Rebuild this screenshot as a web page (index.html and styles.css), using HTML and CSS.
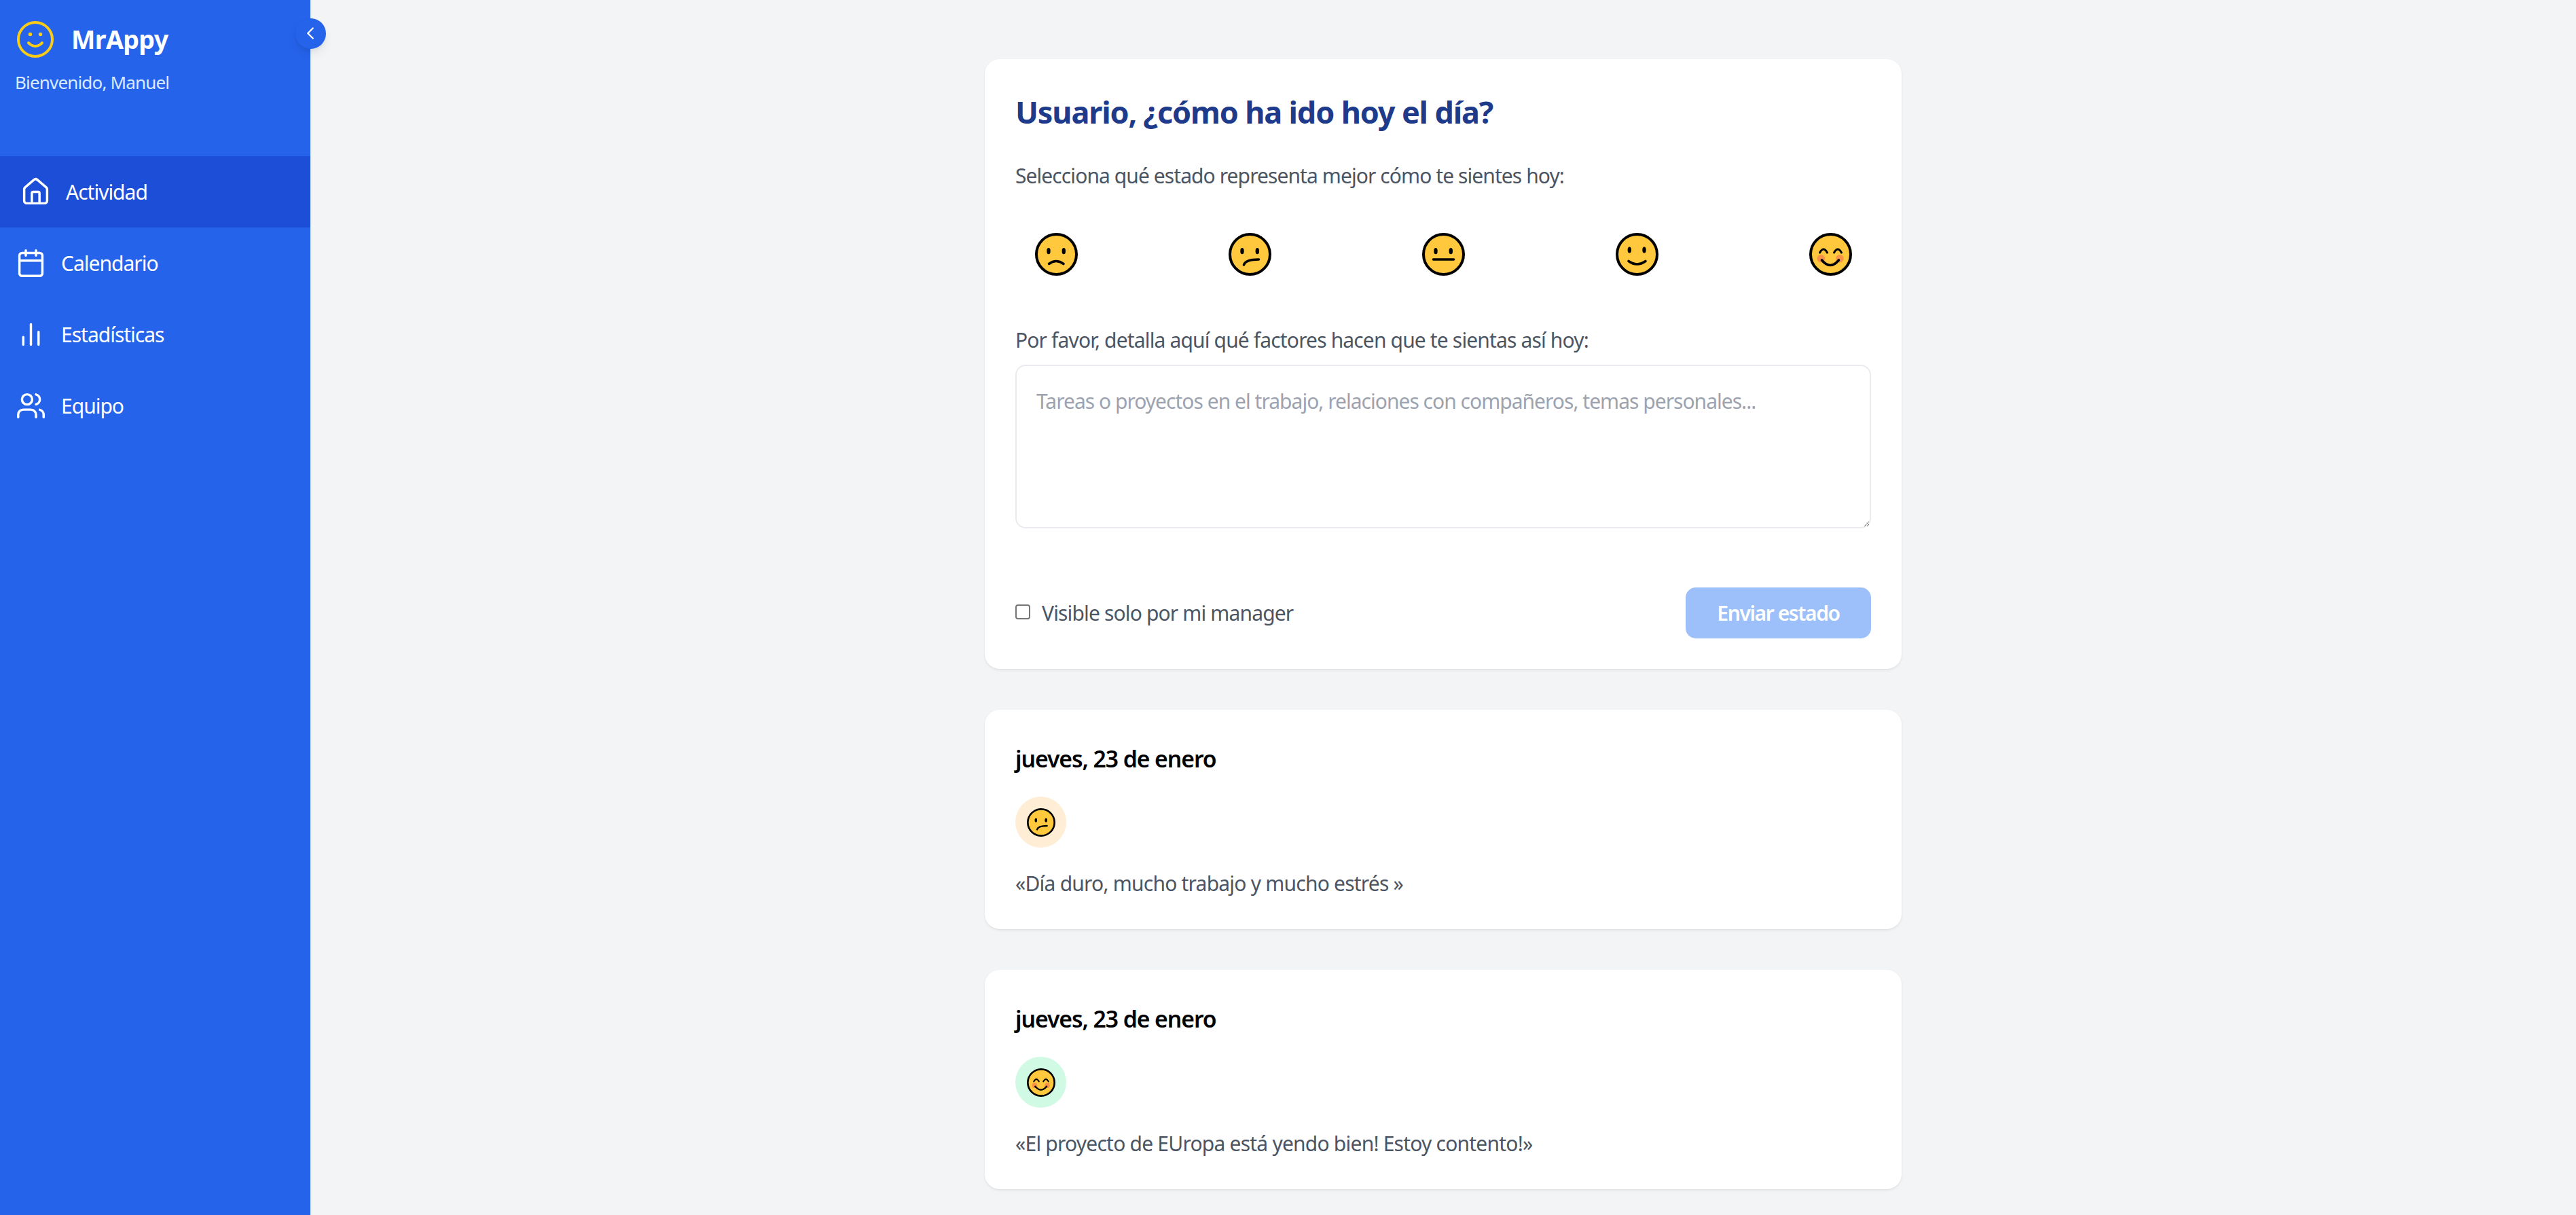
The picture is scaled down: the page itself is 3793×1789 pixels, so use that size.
FILE: index.html
```html
<!DOCTYPE html>
<html lang="es">
<head>
    <meta charset="UTF-8">
    <meta name="viewport" content="width=device-width, initial-scale=1.0">
    <title>MrAppy</title>
    <link rel="stylesheet" href="styles.css">
</head>
<body>
    <!-- Emoji faces, reused in the picker and in the history -->
    <svg class="defs" width="0" height="0">
        <symbol id="face-sad" viewBox="0 0 63 63">
            <circle class="face" cx="31.5" cy="31.5" r="29.5"/>
            <ellipse cx="20" cy="26.7" rx="2.7" ry="4.6"/>
            <ellipse cx="42.3" cy="26.7" rx="2.7" ry="4.6"/>
            <path class="mouth" d="M20.500 45.500q10.500-8 21.500 0"/>
        </symbol>
        <symbol id="face-confused" viewBox="0 0 63 63">
            <circle class="face" cx="31.5" cy="31.5" r="29.5"/>
            <ellipse cx="20" cy="26.7" rx="2.7" ry="4.6"/>
            <ellipse cx="42.3" cy="26.7" rx="2.7" ry="4.6"/>
            <path class="mouth" d="M22.500 47q2.500-8 22-8"/>
        </symbol>
        <symbol id="face-neutral" viewBox="0 0 63 63">
            <circle class="face" cx="31.5" cy="31.5" r="29.5"/>
            <ellipse cx="20" cy="26.7" rx="2.7" ry="4.6"/>
            <ellipse cx="42.3" cy="26.7" rx="2.7" ry="4.6"/>
            <path class="mouth" d="M16.500 39h30"/>
        </symbol>
        <symbol id="face-happy" viewBox="0 0 63 63">
            <circle class="face" cx="31.5" cy="31.5" r="29.5"/>
            <ellipse cx="20.3" cy="25" rx="2.7" ry="4.6"/>
            <ellipse cx="42" cy="25" rx="2.7" ry="4.6"/>
            <path class="mouth" d="M19 41.500q12.500 9 25 0"/>
        </symbol>
        <symbol id="face-joy" viewBox="0 0 63 63">
            <circle class="face" cx="31.5" cy="31.5" r="29.5"/>
            <circle class="cheek" cx="17.3" cy="37.7" r="5.8"/>
            <circle class="cheek" cx="45" cy="37.7" r="5.8"/>
            <path class="mouth thin" d="M15.500 29q5.500-10 11 0M36.500 29q5.500-10 11 0"/>
            <path class="mouth" d="M18.500 40q12.500 15 25 0"/>
        </symbol>
    </svg>

    <div class="layout">
        <aside class="sidebar">
            <button class="collapse" type="button" aria-label="Contraer menú">
                <svg class="ico" viewBox="0 0 24 24"><path d="m15 18-6-6 6-6"/></svg>
            </button>
            <div class="brand">
                <div class="brand-row">
                    <svg class="ico logo" viewBox="0 0 24 24">
                        <circle cx="12" cy="12" r="10"/>
                        <path d="M8 14s1.500 2 4 2 4-2 4-2"/>
                        <path class="dot" d="M9 9h.01M15 9h.01"/>
                    </svg>
                    <span class="brand-name">MrAppy</span>
                </div>
                <p class="welcome">Bienvenido, Manuel</p>
            </div>
            <nav class="nav">
                <a class="nav-item active" href="#">
                    <svg class="ico" viewBox="0 0 24 24">
                        <path d="M15 21v-8a1 1 0 0 0-1-1h-4a1 1 0 0 0-1 1v8"/>
                        <path d="M3 10a2 2 0 0 1 .709-1.528l7-5.999a2 2 0 0 1 2.582 0l7 5.999A2 2 0 0 1 21 10v9a2 2 0 0 1-2 2H5a2 2 0 0 1-2-2z"/>
                    </svg>
                    <span>Actividad</span>
                </a>
                <a class="nav-item" href="#">
                    <svg class="ico" viewBox="0 0 24 24">
                        <path d="M8 2v4M16 2v4M3 10h18"/>
                        <rect x="3" y="4" width="18" height="18" rx="2"/>
                    </svg>
                    <span>Calendario</span>
                </a>
                <a class="nav-item" href="#">
                    <svg class="ico" viewBox="0 0 24 24">
                        <path d="M18 20V10M12 20V4M6 20v-6"/>
                    </svg>
                    <span>Estadísticas</span>
                </a>
                <a class="nav-item" href="#">
                    <svg class="ico" viewBox="0 0 24 24">
                        <path d="M16 21v-2a4 4 0 0 0-4-4H6a4 4 0 0 0-4 4v2"/>
                        <circle cx="9" cy="7" r="4"/>
                        <path d="M22 21v-2a4 4 0 0 0-3-3.870M16 3.130a4 4 0 0 1 0 7.750"/>
                    </svg>
                    <span>Equipo</span>
                </a>
            </nav>
        </aside>

        <main class="main">
            <section class="card status-form">
                <h1 class="title">Usuario, ¿cómo ha ido hoy el día?</h1>
                <p class="text prompt">Selecciona qué estado representa mejor cómo te sientes hoy:</p>
                <div class="moods">
                    <button class="mood" type="button"><svg class="face-big"><use href="#face-sad"/></svg></button>
                    <button class="mood" type="button"><svg class="face-big"><use href="#face-confused"/></svg></button>
                    <button class="mood" type="button"><svg class="face-big"><use href="#face-neutral"/></svg></button>
                    <button class="mood" type="button"><svg class="face-big"><use href="#face-happy"/></svg></button>
                    <button class="mood" type="button"><svg class="face-big"><use href="#face-joy"/></svg></button>
                </div>
                <label class="text detail-label" for="detail">Por favor, detalla aquí qué factores hacen que te sientas así hoy:</label>
                <textarea class="detail" id="detail" placeholder="Tareas o proyectos en el trabajo, relaciones con compañeros, temas personales..."></textarea>
                <div class="form-foot">
                    <label class="text private"><input class="check" type="checkbox"> Visible solo por mi manager</label>
                    <button class="send" type="button" disabled>Enviar estado</button>
                </div>
            </section>

            <article class="card entry">
                <h2 class="entry-date">jueves, 23 de enero</h2>
                <div class="badge badge-orange"><svg class="face-small"><use href="#face-confused"/></svg></div>
                <p class="text quote">«Día duro, mucho trabajo y mucho estrés »</p>
            </article>

            <article class="card entry">
                <h2 class="entry-date">jueves, 23 de enero</h2>
                <div class="badge badge-green"><svg class="face-small"><use href="#face-joy"/></svg></div>
                <p class="text quote">«El proyecto de EUropa está yendo bien! Estoy contento!»</p>
            </article>
        </main>
    </div>
</body>
</html>
```

FILE: styles.css
```css
/* General styles */
* {
    box-sizing: border-box;
}

body {
    font-family: 'Noto Sans', 'Open Sans', sans-serif;
    background-color: #f3f4f6;
    margin: 0;
    color: #4b5563;
}

.defs {
    position: absolute;
}

.layout {
    display: flex;
    min-height: 1789px;
}

/* Shared icon stroke */
.ico {
    fill: none;
    stroke: currentColor;
    stroke-width: 1.85;
    stroke-linecap: round;
    stroke-linejoin: round;
    flex-shrink: 0;
}

/* Sidebar */
.sidebar {
    position: relative;
    width: 457px;
    flex-shrink: 0;
    background: #2563eb;
    color: #fff;
}

.collapse {
    position: absolute;
    top: 27px;
    right: -23px;
    width: 45px;
    height: 45px;
    padding: 0;
    border: none;
    border-radius: 50%;
    background: #2563eb;
    color: #fff;
    display: flex;
    align-items: center;
    justify-content: center;
    box-shadow: 0 8px 16px -3px rgba(0, 0, 0, 0.1), 0 3px 6px -2px rgba(0, 0, 0, 0.06);
}

.collapse .ico {
    width: 30px;
    height: 30px;
    margin-left: -2px;
    margin-top: -2px;
    stroke-width: 1.9;
}

.brand {
    height: 230px;
    padding: 28px 22px 0;
}

.brand-row {
    display: flex;
    align-items: center;
    gap: 23px;
}

.logo {
    width: 60px;
    height: 60px;
    color: #facc15;
    stroke-width: 1.6;
}

.logo .dot {
    stroke-width: 2.2;
}

.brand-name {
    font-size: 37.5px;
    font-weight: 700;
    line-height: 52px;
    letter-spacing: -0.6px;
}

.welcome {
    margin: 15px 0 0;
    font-size: 26px;
    line-height: 36px;
    color: #dbeafe;
    letter-spacing: -0.83px;
}

.nav-item {
    display: flex;
    align-items: center;
    gap: 22.5px;
    height: 105px;
    padding-left: 22.5px;
    color: #fff;
    text-decoration: none;
    font-size: 30px;
    letter-spacing: -1px;
}

.nav-item .ico {
    width: 45px;
    height: 45px;
}

.nav-item.active {
    background: #1d4ed8;
    border-left: 7.5px solid #1d4ed8;
}

/* Main column */
.main {
    flex: 1;
    padding: 87px 0 39px;
    display: flex;
    flex-direction: column;
    align-items: center;
    gap: 60px;
}

.card {
    width: 1350px;
    padding: 45px;
    background: #fff;
    border-radius: 22px;
    box-shadow: 0 2px 4px rgba(0, 0, 0, 0.06), 0 1px 2px rgba(0, 0, 0, 0.04);
}

.title {
    margin: 0;
    font-size: 45px;
    line-height: 66px;
    font-weight: 700;
    color: #1e3a8a;
    letter-spacing: -1.16px;
}

.text {
    margin: 0;
    font-size: 30px;
    line-height: 45px;
    color: #4b5563;
    letter-spacing: -0.85px;
}

.prompt {
    margin-top: 38px;
    letter-spacing: -0.92px;
}

.moods {
    display: flex;
    justify-content: space-between;
    margin-top: 33px;
}

.mood {
    width: 120px;
    height: 120px;
    padding: 0;
    border: none;
    background: none;
    display: flex;
    align-items: center;
    justify-content: center;
}

.face-big {
    width: 63px;
    height: 63px;
}

.face-small {
    width: 42px;
    height: 42px;
}

.face {
    fill: #ffc83d;
    stroke: #000;
    stroke-width: 4;
}

.cheek {
    fill: #f7894a;
    opacity: 0.85;
}

.mouth {
    fill: none;
    stroke: #000;
    stroke-width: 3.6;
    stroke-linecap: round;
}

.mouth.thin {
    stroke-width: 3;
}

.detail-label {
    display: block;
    margin-top: 44px;
}

.detail {
    display: block;
    width: 100%;
    height: 241px;
    margin-top: 14px;
    padding: 29px 29px 15px;
    border: 2px solid #e9ebee;
    border-radius: 15px;
    font-family: inherit;
    font-size: 30px;
    line-height: 45px;
    letter-spacing: -0.98px;
    outline: none;
}

.detail::placeholder {
    color: #9ca3af;
}

.form-foot {
    display: flex;
    align-items: center;
    justify-content: space-between;
    margin-top: 87px;
}

.private {
    display: flex;
    align-items: center;
    gap: 17px;
}

.check {
    appearance: none;
    width: 22px;
    height: 22px;
    margin: 0 0 3px;
    border: 2px solid #767676;
    border-radius: 4px;
    background: #fff;
}

.send {
    width: 273px;
    height: 75px;
    padding: 0;
    border: none;
    border-radius: 15px;
    background: #9dc0fa;
    color: #fff;
    font-family: inherit;
    font-size: 30px;
    font-weight: 600;
    letter-spacing: -1.4px;
}

/* History entries */
.entry-date {
    margin: 0;
    font-size: 33.75px;
    line-height: 55px;
    font-weight: 600;
    color: #000;
    letter-spacing: -1.08px;
}

.quote {
    letter-spacing: -0.78px;
}

.badge {
    width: 75px;
    height: 75px;
    margin: 28px 0 30px;
    border-radius: 50%;
    display: flex;
    align-items: center;
    justify-content: center;
}

.badge-orange {
    background: #ffedd5;
}

.badge-green {
    background: #d1fae5;
}
```
